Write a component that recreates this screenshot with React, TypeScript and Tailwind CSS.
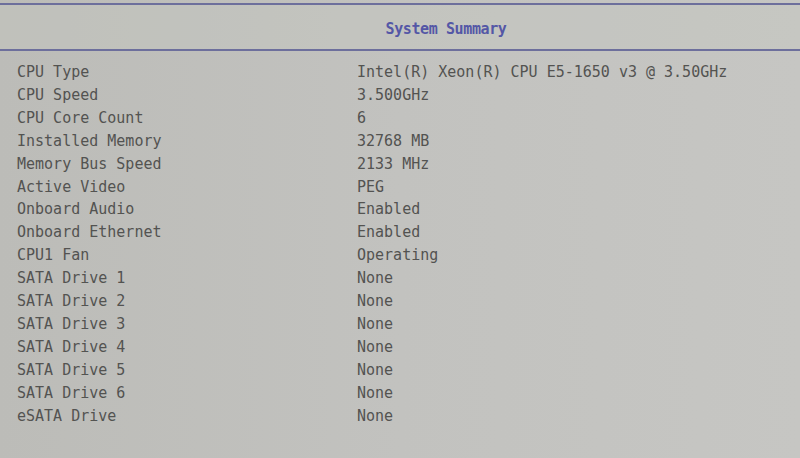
const rows: [string, string][] = [
  ["CPU Type", "Intel(R) Xeon(R) CPU E5-1650 v3 @ 3.50GHz"],
  ["CPU Speed", "3.500GHz"],
  ["CPU Core Count", "6"],
  ["Installed Memory", "32768 MB"],
  ["Memory Bus Speed", "2133 MHz"],
  ["Active Video", "PEG"],
  ["Onboard Audio", "Enabled"],
  ["Onboard Ethernet", "Enabled"],
  ["CPU1 Fan", "Operating"],
  ["SATA Drive 1", "None"],
  ["SATA Drive 2", "None"],
  ["SATA Drive 3", "None"],
  ["SATA Drive 4", "None"],
  ["SATA Drive 5", "None"],
  ["SATA Drive 6", "None"],
  ["eSATA Drive", "None"],
];

export default function App() {
  return (
    <div className="w-[800px] h-[458px] overflow-hidden bg-linear-to-r from-[#bcbcb8] via-[#c2c2bf] to-[#c6c6c3] font-['DejaVu_Sans_Mono',monospace] pt-[3px]">
      {/* header band */}
      <div className="h-[48px] border-y-2 border-[#6d6f9c] flex items-center justify-center pl-[92px] pt-[4px] bg-[#c6c7c1]/40">
        <span className="text-[15px] font-bold text-[#5457a6] tracking-[-0.4px]">System Summary</span>
      </div>

      <div className="pt-[10px] pl-[17px] grid grid-cols-[340px_1fr] text-[15px] leading-[22.9px] text-[#535351]">
        {rows.map(([label, value]) => (
          <div key={label} className="contents">
            <span>{label}</span>
            <span>{value}</span>
          </div>
        ))}
      </div>
    </div>
  );
}
